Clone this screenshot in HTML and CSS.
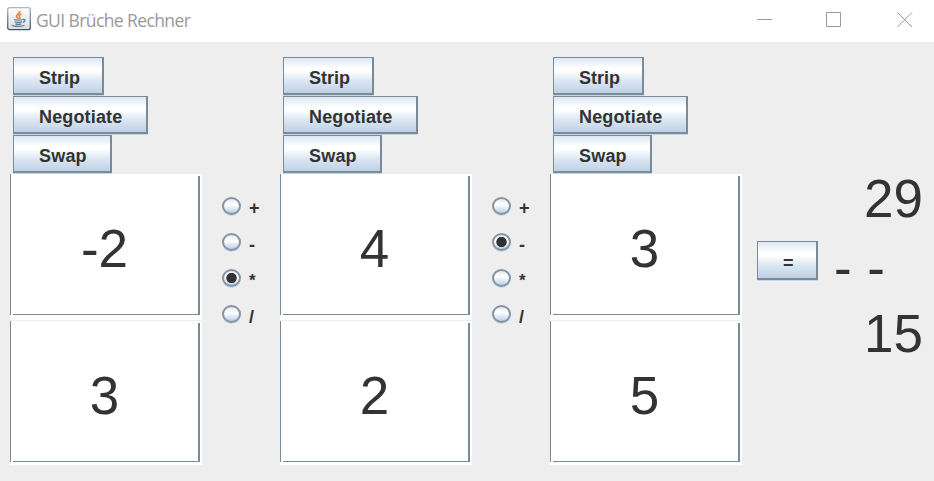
FILE: index.html
```html
<!DOCTYPE html>
<html lang="de">
<head>
<meta charset="utf-8">
<title>GUI Brüche Rechner</title>
<link rel="stylesheet" href="styles.css">
</head>
<body>
<header class="titlebar">
  <svg class="logo" width="24" height="24" viewBox="0 0 24 24">
    <defs>
      <linearGradient id="tile" x1="0" y1="0" x2="0" y2="1"><stop offset="0" stop-color="#fff"/><stop offset="1" stop-color="#d9dcdf"/></linearGradient>
      <linearGradient id="rim" x1="0" y1="0" x2="0" y2="1"><stop offset="0" stop-color="#a9bac6"/><stop offset="1" stop-color="#405763"/></linearGradient>
    </defs>
    <rect x=".7" y=".7" width="22.6" height="22" rx="2" fill="url(#tile)" stroke="url(#rim)" stroke-width="1.3"/>
    <path d="M12.8 4c1 2.500-4.300 3.500-3 6 .4.900 1.200 1.300 1.700 2M14.500 7c-2.300 1-3 2-1.800 3.200.5.600.2 1.200-.4 1.700" fill="none" stroke="#e8853a" stroke-width="1.700"/>
    <path d="M7 12.500c1.500.8 6.500.8 9 0M7.800 14.800c2 .7 5.200.7 7.200 0M8.500 16.800c1.700.6 4.200.6 5.700 0M16 12.400c3-.6 2.500 2.300-.2 3M5.500 18c-2 1.200 9 2 12 .3" fill="none" stroke="#5c7f96" stroke-width="1.300"/>
  </svg>
  <h1 class="title">GUI Brüche Rechner</h1>
  <svg class="controls" width="157" height="16" viewBox="0 0 157 16" fill="none" stroke="#999">
    <path d="M0 7.500h15M69.500.5h14v14h-14zM140.500.5l14.500 14.500M155 .5l-14.500 14.500"/>
  </svg>
</header>
<main class="panel">
  <section class="fraction">
    <div class="actions"><button class="btn">Strip</button><button class="btn negotiate">Negotiate</button><button class="btn swap">Swap</button></div>
    <div class="field">-2</div>
    <div class="field lower">3</div>
  </section>
  <div class="operators">
    <div class="option"><i class="radio"></i><span>+</span></div>
    <div class="option"><i class="radio"></i><span class="low">-</span></div>
    <div class="option"><i class="radio on"></i><span class="star">*</span></div>
    <div class="option"><i class="radio"></i><span class="low">/</span></div>
  </div>
  <section class="fraction">
    <div class="actions"><button class="btn">Strip</button><button class="btn negotiate">Negotiate</button><button class="btn swap">Swap</button></div>
    <div class="field">4</div>
    <div class="field lower">2</div>
  </section>
  <div class="operators">
    <div class="option"><i class="radio"></i><span>+</span></div>
    <div class="option"><i class="radio on"></i><span class="low">-</span></div>
    <div class="option"><i class="radio"></i><span class="star">*</span></div>
    <div class="option"><i class="radio"></i><span class="low">/</span></div>
  </div>
  <section class="fraction">
    <div class="actions"><button class="btn">Strip</button><button class="btn negotiate">Negotiate</button><button class="btn swap">Swap</button></div>
    <div class="field">3</div>
    <div class="field lower">5</div>
  </section>
  <button class="btn equals">=</button>
  <div class="result">
    <div class="number">29</div>
    <div class="bar">- -</div>
    <div class="number">15</div>
  </div>
</main>
</body>
</html>
```

FILE: styles.css
```css
*, *::before, *::after { box-sizing: border-box; }
body {
  margin: 0;
  width: 934px;
  height: 481px;
  overflow: hidden;
  background: #eee;
  color: #333;
  font-family: "Liberation Sans", Arial, sans-serif;
}
.titlebar {
  display: flex;
  height: 42px;
  padding: 7px 20px 0 7px;
  background: #fff;
}
.logo { flex: none; }
.title {
  margin: 0 0 0 5px;
  font: 400 17.5px/27px "Open Sans", sans-serif;
  letter-spacing: -.6px;
  color: #999;
  white-space: nowrap;
}
.controls { margin: 5px 0 0 auto; }
.panel {
  display: flex;
  align-items: flex-start;
  height: 439px;
  padding: 15px 0 0 10px;
}
.fraction { flex: none; width: 192px; }
.actions {
  display: flex;
  flex-direction: column;
  align-items: flex-start;
  gap: 1px;
  height: 117px;
  padding-left: 3px;
}
.btn {
  flex: none;
  width: 91px;
  height: 38px;
  margin: 0;
  padding: 5px 0 0 25px;
  border: solid #7a8a99;
  border-width: 1px 2px 2px 1px;
  border-radius: 0;
  background: linear-gradient(#dde8f3 0%, #fff 30%, #fff 38%, #dbe6f2 65%, #bed2e6 100%);
  box-shadow: 0 1px 0 #c6d7e7;
  color: #333;
  font: bold 18px/30px "Liberation Sans", Arial, sans-serif;
  text-align: left;
}
.negotiate { width: 135px; letter-spacing: .15px; }
.swap { width: 99px; letter-spacing: .2px; }
.field {
  position: relative;
  height: 146px;
  padding-right: 3px;
  background: #fff;
  font-size: 53px;
  line-height: 149px;
  text-align: center;
}
.field::before {
  content: "";
  position: absolute;
  inset: 0 auto auto 0;
  width: 1px;
  height: 141px;
  background: #7a8a99;
}
.field::after {
  content: "";
  position: absolute;
  top: 2px;
  left: 3px;
  width: 187px;
  height: 139px;
  border: solid #7a8a99;
  border-width: 0 2px 1px 0;
}
.lower { height: 144px; margin-top: 1px; }
.operators {
  flex: none;
  width: 78px;
  padding: 131px 0 0 20px;
}
.option {
  display: flex;
  gap: 8px;
  height: 36px;
  padding-top: 9px;
  font: bold 18px/23px "Liberation Sans", Arial, sans-serif;
}
.low { padding-top: 1px; }
.star { font-size: 17px; }
.radio {
  flex: none;
  width: 19px;
  height: 18px;
  border: 2px solid #8493a1;
  border-radius: 50%;
  background: linear-gradient(#dde8f3, #fff 35%, #fff 42%, #b8cfe5);
  box-shadow: 0 1px 0 #cbdbea;
}
.on { background: radial-gradient(circle, #333 4.8px, transparent 5.5px), linear-gradient(#dde8f3, #fff 35%, #fff 42%, #b8cfe5); }
.equals { width: 61px; height: 39px; margin: 184px 0 0 15px; }
.result {
  flex: none;
  width: 89px;
  margin: 107px 0 0 16px;
  font-size: 53px;
  line-height: 69px;
}
.number { height: 68px; text-align: right; }
.number:last-child { line-height: 67px; }
.bar { height: 68px; line-height: 71px; word-spacing: 1px; white-space: pre; }
```
